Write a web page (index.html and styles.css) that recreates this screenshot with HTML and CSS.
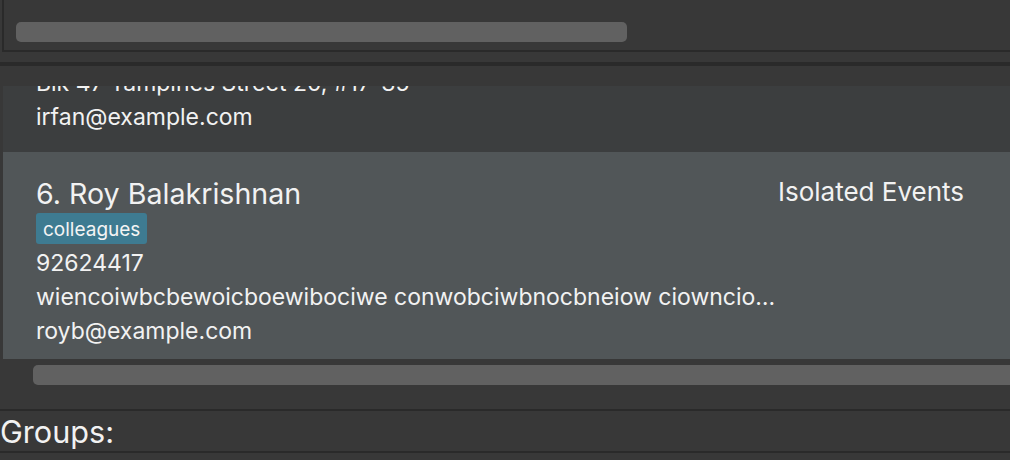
FILE: index.html
```html
<!DOCTYPE html>
<html lang="en">
<head>
<meta charset="utf-8">
<title>Address Book</title>
<link rel="stylesheet" href="styles.css">
</head>
<body>
<div class="app">
  <div class="top-pane">
    <div class="top-thumb"></div>
  </div>
  <div class="separator"></div>
  <div class="list-pane">
    <div class="viewport">
      <div class="list">
        <div class="card card-even card-first">
          <div class="card-main">
            <div class="name">5. Irfan Ibrahim</div>
            <div class="tags"><span class="tag">classmates</span></div>
            <div class="line">92492021</div>
            <div class="line">Blk 47 Tampines Street 20, #17-35</div>
            <div class="line">irfan@example.com</div>
          </div>
          <div class="card-side"></div>
        </div>
        <div class="card card-odd">
          <div class="card-main">
            <div class="name">6. Roy Balakrishnan</div>
            <div class="tags"><span class="tag">colleagues</span></div>
            <div class="line">92624417</div>
            <div class="line">wiencoiwbcbewoicboewibociwe conwobciwbnocbneiow ciowncioqwnocwnocinwoecnwo</div>
            <div class="line">royb@example.com</div>
          </div>
          <div class="card-side">Isolated Events</div>
        </div>
      </div>
    </div>
    <div class="hbar"><div class="hbar-thumb"></div></div>
  </div>
  <div class="groups">Groups:</div>
</div>
</body>
</html>
```
FILE: styles.css
```css
html, body {
  margin: 0;
  padding: 0;
  background: #383838;
  height: 100%;
  overflow: hidden;
}

.app {
  font-family: Inter, "Noto Sans", sans-serif;
  color: #f2f2f2;
  width: 1010px;
  height: 460px;
  overflow: hidden;
}

.top-pane {
  margin-left: 2px;
  border-left: 2px solid #2a2a2a;
  border-bottom: 2px solid #2a2a2a;
  padding-top: 22px;
  height: 28px;
}

.top-thumb {
  margin-left: 12px;
  width: 611px;
  height: 20px;
  border-radius: 5px;
  background: #616161;
}

.separator {
  margin-top: 10px;
  height: 4px;
  background: #2a2a2a;
}

.list-pane {
  padding-top: 20px;
}

.viewport {
  margin-left: 3px;
  height: 273px;
  overflow: hidden;
}

.list {
  margin-top: -148px;
}

.card {
  display: flex;
  padding: 25px 46px 11px 33px;
}

.card-first {
  padding-bottom: 18px;
}

.card-even {
  background: #3c3e3f;
}

.card-odd {
  background: #515658;
}

.card-main {
  width: 744px;
  min-width: 0;
}

.card-side {
  margin-left: auto;
  margin-top: -2px;
  font-size: 26px;
  line-height: 34px;
  white-space: nowrap;
}

.name {
  font-size: 28.6px;
  line-height: 34px;
  white-space: nowrap;
}

.tags {
  display: flex;
  margin-top: 2px;
  margin-bottom: 2px;
}

.tag {
  background: #3e7b91;
  color: #f4f4f4;
  font-size: 19px;
  line-height: 29px;
  padding: 2px 7px 0;
  border-radius: 3px;
}

.line {
  font-size: 23px;
  line-height: 34px;
  white-space: nowrap;
  overflow: hidden;
  text-overflow: ellipsis;
}

.hbar {
  padding-top: 6px;
  padding-bottom: 24px;
}

.hbar-thumb {
  margin-left: 33px;
  height: 20px;
  border-radius: 5px 0 0 5px;
  background: #616161;
}

.groups {
  border-top: 2px solid #2a2a2a;
  border-bottom: 2px solid #2a2a2a;
  height: 38px;
  padding-top: 2px;
  font-size: 30.6px;
  line-height: 38px;
}
```
